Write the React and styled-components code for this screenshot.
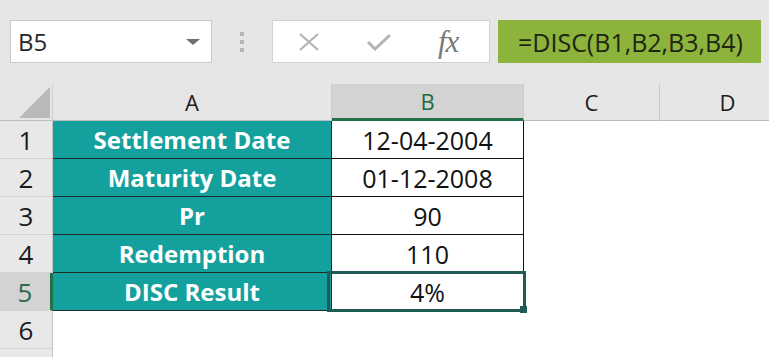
import { Fragment } from "react";
import styled, { createGlobalStyle } from "styled-components";

const GlobalStyle = createGlobalStyle`
  html, body {
    margin: 0;
    padding: 0;
    background: #ffffff;
    overflow: hidden;
  }
  body {
    font-family: "Open Sans", "Noto Sans", sans-serif;
    color: #1b1b1b;
  }
`;

const rows = [
  { label: "Settlement Date", value: "12-04-2004" },
  { label: "Maturity Date", value: "01-12-2008" },
  { label: "Pr", value: "90" },
  { label: "Redemption", value: "110" },
  { label: "DISC Result", value: "4%", active: true },
];

const columns = ["A", "B", "C", "D"];

const Page = styled.div`
  width: 769px;
  height: 357px;
  overflow: hidden;
  background: #ffffff;
`;

const Toolbar = styled.div`
  display: flex;
  align-items: flex-start;
  height: 84px;
  box-sizing: border-box;
  padding: 20px 0 0 10px;
  background: #e6e6e6;
`;

const NameBox = styled.div`
  width: 202px;
  height: 43px;
  box-sizing: border-box;
  display: flex;
  align-items: center;
  justify-content: space-between;
  padding: 0 11px 0 7px;
  background: #ffffff;
  border: 1px solid #c9c9c9;
  font-size: 24px;
  color: #262626;
`;

const Caret = styled.span`
  width: 0;
  height: 0;
  border-left: 7px solid transparent;
  border-right: 7px solid transparent;
  border-top: 6px solid #6e6e6e;
`;

const Grip = styled.div`
  width: 60px;
  height: 43px;
  display: flex;
  flex-direction: column;
  align-items: center;
  justify-content: center;
  gap: 4px;

  span {
    width: 4px;
    height: 4px;
    background: #b5b5b5;
  }
`;

const FxBox = styled.div`
  width: 218px;
  height: 43px;
  box-sizing: border-box;
  display: flex;
  align-items: center;
  padding-left: 25px;
  gap: 46px;
  background: #ffffff;
  border: 1px solid #d2d2d2;
`;

const FxLabel = styled.span`
  font-family: "Liberation Serif", "DejaVu Serif", serif;
  font-style: italic;
  font-size: 31px;
  line-height: 1;
  color: #7a7a7a;
  letter-spacing: -1px;
`;

const Formula = styled.div`
  margin-left: 8px;
  width: 263px;
  height: 43px;
  box-sizing: border-box;
  display: flex;
  align-items: center;
  padding-left: 20px;
  background: #8cb33b;
  font-size: 25px;
  color: #1d2614;
  white-space: nowrap;
`;

const Sheet = styled.div`
  display: grid;
  grid-template-columns: 53px 279px 192px 136px 136px;
  grid-template-rows: 37px repeat(7, 38px);
`;

const Corner = styled.div`
  background: #e6e6e6;
  border-right: 1px solid #cfcfcf;
  border-bottom: 1px solid #bdbdbd;
  box-sizing: border-box;
  display: flex;
  align-items: flex-end;
  justify-content: flex-end;
  padding: 0 2px 2px 0;
`;

const ColHead = styled.div`
  box-sizing: border-box;
  display: flex;
  align-items: center;
  justify-content: center;
  font-size: 22px;
  background: ${({ $active }) => ($active ? "#d3d3d3" : "#e6e6e6")};
  color: ${({ $active }) => ($active ? "#1f6a42" : "#1b1b1b")};
  border-right: 1px solid #cbcbcb;
  border-bottom: ${({ $active }) =>
    $active ? "3px solid #237047" : "1px solid #bdbdbd"};
`;

const RowHead = styled.div`
  box-sizing: border-box;
  display: flex;
  align-items: center;
  justify-content: center;
  font-size: 26px;
  background: ${({ $active }) => ($active ? "#d3d3d3" : "#e8e8e8")};
  color: ${({ $active }) => ($active ? "#2d6b4c" : "#1b1b1b")};
  border-bottom: 1px solid #d3d3d3;
  border-right: ${({ $active }) =>
    $active ? "3px solid #237047" : "1px solid #c4c4c4"};
`;

const LabelCell = styled.div`
  box-sizing: border-box;
  display: flex;
  align-items: center;
  justify-content: center;
  background: #14a19d;
  color: #ffffff;
  font-weight: 700;
  font-size: 24px;
  border-bottom: 1px solid #1c2b2a;
  border-right: 1px solid #1c2b2a;
`;

const ValueCell = styled.div`
  position: relative;
  box-sizing: border-box;
  display: flex;
  align-items: center;
  justify-content: center;
  background: #ffffff;
  font-size: 25px;
  color: #111111;
  border-bottom: 1px solid #111111;
  border-right: 1px solid #111111;
`;

const Selection = styled.span`
  position: absolute;
  left: -5px;
  top: -2px;
  right: -3px;
  bottom: -2px;
  border: 3px solid #1e5c55;
  pointer-events: none;

  &::after {
    content: "";
    position: absolute;
    right: -4px;
    bottom: -4px;
    width: 7px;
    height: 7px;
    background: #1e5c55;
  }
`;

const Blank = styled.div`
  background: #ffffff;
`;

const CrossIcon = () => (
  <svg width="22" height="18" viewBox="0 0 22 18">
    <path d="M2 1 L20 17 M20 1 L2 17" stroke="#b3b3b3" strokeWidth="2.2" fill="none" />
  </svg>
);

const CheckIcon = () => (
  <svg width="26" height="18" viewBox="0 0 26 18">
    <path d="M2 9 L9 16 L24 2" stroke="#b3b3b3" strokeWidth="3" fill="none" />
  </svg>
);

const CornerIcon = () => (
  <svg width="31" height="31" viewBox="0 0 31 31">
    <polygon points="31,0 31,31 0,31" fill="#b9b9b9" />
  </svg>
);

export default function App() {
  return (
    <Page>
      <GlobalStyle />
      <Toolbar>
        <NameBox>
          B5
          <Caret />
        </NameBox>
        <Grip>
          <span />
          <span />
          <span />
        </Grip>
        <FxBox>
          <CrossIcon />
          <CheckIcon />
          <FxLabel>fx</FxLabel>
        </FxBox>
        <Formula>=DISC(B1,B2,B3,B4)</Formula>
      </Toolbar>
      <Sheet>
        <Corner>
          <CornerIcon />
        </Corner>
        {columns.map((c) => (
          <ColHead key={c} $active={c === "B"}>
            {c}
          </ColHead>
        ))}
        {rows.map((r, i) => (
          <Fragment key={i}>
            <RowHead $active={r.active}>{i + 1}</RowHead>
            <LabelCell>{r.label}</LabelCell>
            <ValueCell>
              {r.value}
              {r.active && <Selection />}
            </ValueCell>
            <Blank />
            <Blank />
          </Fragment>
        ))}
        {["6", ""].map((n, i) => (
          <Fragment key={`e${i}`}>
            <RowHead>{n}</RowHead>
            <Blank />
            <Blank />
            <Blank />
            <Blank />
          </Fragment>
        ))}
      </Sheet>
    </Page>
  );
}
